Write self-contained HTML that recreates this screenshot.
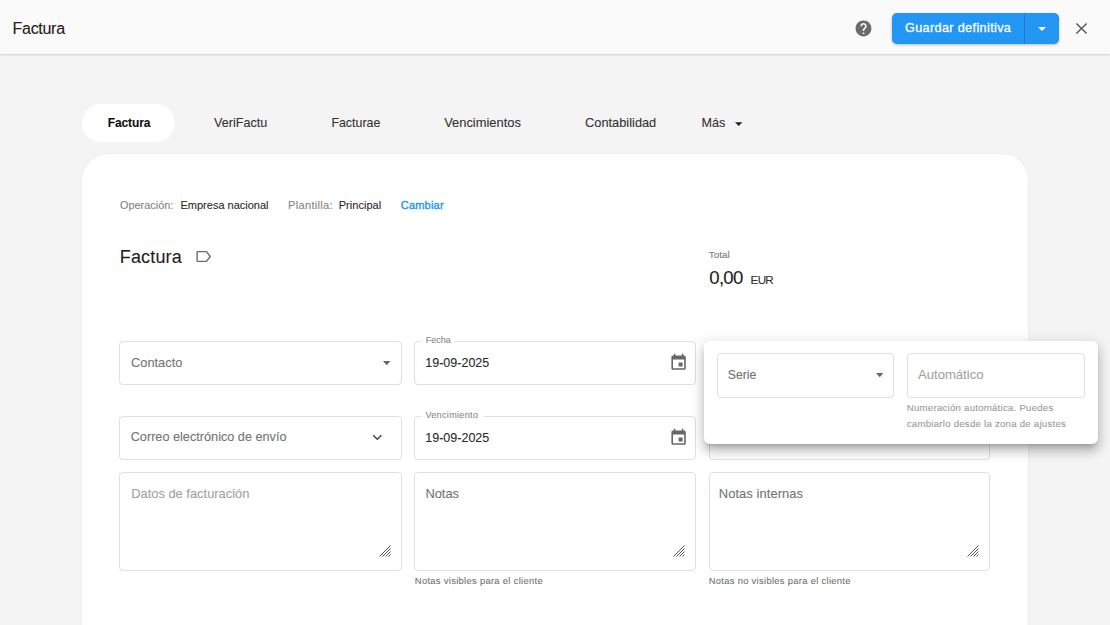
<!DOCTYPE html><html><head><meta charset="utf-8"><title>Factura</title><style>

*{margin:0;padding:0;box-sizing:border-box}
html,body{width:1110px;height:625px;overflow:hidden;background:#f4f4f4;font-family:"Liberation Sans",sans-serif}
.t{position:absolute;white-space:nowrap;-webkit-text-stroke:0.1px currentColor}
.a{position:absolute}
.hdr{left:0;top:0;width:1110px;height:54px;background:#fafafa;box-shadow:0 1px 3px rgba(0,0,0,.1),0 1px 1px rgba(0,0,0,.04)}
.pill{left:82px;top:104px;width:93px;height:38px;border-radius:19px;background:#fff}
.card{left:82px;top:154px;width:946px;height:520px;border-radius:26px;background:#fff;box-shadow:0 0 2px rgba(0,0,0,.08)}
.box{border:1px solid #e0e0e0;border-radius:4px;background:#fff}
.btn{left:892px;top:13px;width:167px;height:31px;border-radius:5px;background:#2196f3;box-shadow:0 1px 3px rgba(0,0,0,.25)}
.div{left:1024px;top:13px;width:1px;height:31px;background:#2a78c4}
.pop{left:704px;top:340.5px;width:393.5px;height:103px;border-radius:6px;background:#fff;box-shadow:0 5px 5px -3px rgba(0,0,0,.2),0 8px 10px 1px rgba(0,0,0,.14),0 3px 14px 2px rgba(0,0,0,.12)}

</style></head><body>
<div class="a hdr"></div>
<div class="a pill"></div>
<div class="a card"></div>
<div class="a btn"></div><div class="a div"></div>
<div class="a box" style="left:119px;top:341px;width:283px;height:43.5px;"></div>
<div class="a box" style="left:414px;top:341px;width:282px;height:43.5px;"></div>
<div class="a box" style="left:119px;top:416px;width:283px;height:44px;"></div>
<div class="a box" style="left:414px;top:416px;width:282px;height:44px;"></div>
<div class="a box" style="left:708.5px;top:341px;width:281.5px;height:119px;"></div>
<div class="a box" style="left:119px;top:472px;width:283px;height:99px;"></div>
<div class="a box" style="left:414px;top:472px;width:282px;height:99px;"></div>
<div class="a box" style="left:708.5px;top:472px;width:281.5px;height:99px;"></div>
<div class="a" style="left:421px;top:339px;width:34px;height:4px;background:#fff"></div>
<div class="a" style="left:421px;top:414px;width:62px;height:4px;background:#fff"></div>

<svg class="a" style="left:854.2px;top:19px" width="19" height="19" viewBox="0 0 24 24"><path fill="#6b6b6b" d="M12 2C6.48 2 2 6.48 2 12s4.48 10 10 10 10-4.48 10-10S17.52 2 12 2zm1 17h-2v-2h2v2zm2.07-7.75l-.9.92C13.45 12.9 13 13.5 13 15h-2v-.5c0-1.1.45-2.1 1.170-2.83l1.24-1.26c.37-.36.59-.86.59-1.41 0-1.1-.9-2-2-2s-2 .9-2 2H8c0-2.21 1.79-4 4-4s4 1.79 4 4c0 .88-.36 1.68-.93 2.25z"/></svg>
<svg class="a" style="left:1035px;top:22px" width="14" height="14" viewBox="0 0 14 14"><path fill="#fff" d="M3 5h8l-4 4z"/></svg>
<svg class="a" style="left:1075px;top:22px" width="13" height="13" viewBox="0 0 13 13"><path stroke="#555" stroke-width="1.4" d="M1.4 1.4L11.6 11.6M11.6 1.4L1.4 11.6"/></svg>
<svg class="a" style="left:731.7px;top:118px" width="12" height="12" viewBox="0 0 12 12"><path fill="#222" d="M3 4.3h7.4L6.7 8z"/></svg>
<svg class="a" style="left:195px;top:250px" width="17" height="13" viewBox="0 0 17 13"><path fill="none" stroke="#6b6b6b" stroke-width="1.4" stroke-linejoin="round" d="M2.9 1.6h8.6l3.7 4.9-3.7 4.9H2.9a.8.8 0 0 1-.8-.8V2.4a.8.8 0 0 1 .8-.8z"/></svg>
<svg class="a" style="left:380px;top:358px" width="14" height="10" viewBox="0 0 14 10"><path fill="#666" d="M3 3h7.4L6.7 7.2z"/></svg>
<svg class="a" style="left:371px;top:432px" width="12" height="10" viewBox="0 0 12 10"><path fill="none" stroke="#444" stroke-width="1.4" d="M2.2 3.2l4.1 4.1 4.1-4.1"/></svg>

<svg class="a" style="left:668.9px;top:353.2px" width="19.2" height="19.2" viewBox="0 0 24 24"><path fill="#666" d="M17 12h-5v5h5v-5zM16 1v2H8V1H6v2H5c-1.11 0-1.99.9-1.99 2L3 19c0 1.1.89 2 2 2h14c1.1 0 2-.9 2-2V5c0-1.1-.9-2-2-2h-1V1h-2zm3 18H5V8h14v11z"/></svg>
<svg class="a" style="left:668.9px;top:428.2px" width="19.2" height="19.2" viewBox="0 0 24 24"><path fill="#666" d="M17 12h-5v5h5v-5zM16 1v2H8V1H6v2H5c-1.11 0-1.99.9-1.99 2L3 19c0 1.1.89 2 2 2h14c1.1 0 2-.9 2-2V5c0-1.1-.9-2-2-2h-1V1h-2zm3 18H5V8h14v11z"/></svg>
<svg class="a" style="left:378.5px;top:545px" width="12" height="12" viewBox="0 0 12 12"><path stroke="#555" stroke-width="1" d="M0.5 11.5L11.5 0.5M3.5 11.5L11.5 3.5M6.5 11.5L11.5 6.5M9.5 11.5L11.5 9.5"/></svg>
<svg class="a" style="left:672.5px;top:545px" width="12" height="12" viewBox="0 0 12 12"><path stroke="#555" stroke-width="1" d="M0.5 11.5L11.5 0.5M3.5 11.5L11.5 3.5M6.5 11.5L11.5 6.5M9.5 11.5L11.5 9.5"/></svg>
<svg class="a" style="left:966.5px;top:545px" width="12" height="12" viewBox="0 0 12 12"><path stroke="#555" stroke-width="1" d="M0.5 11.5L11.5 0.5M3.5 11.5L11.5 3.5M6.5 11.5L11.5 6.5M9.5 11.5L11.5 9.5"/></svg>
<div class="t" style="left:12.60px;top:19.200px;font-size:16px;line-height:19.2px;color:#212121;letter-spacing:-0.3px;">Factura</div>
<div class="t" style="left:107.70px;top:116.200px;font-size:12px;line-height:14.4px;color:#111;font-weight:700;letter-spacing:-0.1px;">Factura</div>
<div class="t" style="left:214.00px;top:116.200px;font-size:12.6px;line-height:15.12px;color:#333;">VeriFactu</div>
<div class="t" style="left:331.40px;top:116.200px;font-size:12.4px;line-height:14.88px;color:#333;">Facturae</div>
<div class="t" style="left:444.20px;top:115.200px;font-size:12.9px;line-height:15.48px;color:#333;">Vencimientos</div>
<div class="t" style="left:585.10px;top:115.200px;font-size:12.8px;line-height:15.36px;color:#333;">Contabilidad</div>
<div class="t" style="left:701.50px;top:116.200px;font-size:12.6px;line-height:15.12px;color:#333;">Más</div>
<div class="t" style="left:905.00px;top:21.200px;font-size:12.6px;line-height:15.12px;color:#fff;letter-spacing:0.38px;-webkit-text-stroke:0.3px #fff;font-variant-ligatures:none;">Guardar definitiva</div>
<div class="t" style="left:120.00px;top:199.200px;font-size:10.9px;line-height:13.08px;color:#858585;">Operación:</div>
<div class="t" style="left:180.50px;top:199.200px;font-size:11px;line-height:13.2px;color:#2b2b2b;">Empresa nacional</div>
<div class="t" style="left:288.00px;top:199.200px;font-size:11.2px;line-height:13.44px;color:#858585;letter-spacing:0.25px;">Plantilla:</div>
<div class="t" style="left:338.70px;top:199.200px;font-size:11.1px;line-height:13.32px;color:#2b2b2b;">Principal</div>
<div class="t" style="left:400.80px;top:199.200px;font-size:11px;line-height:13.2px;color:#2196f3;letter-spacing:0.2px;-webkit-text-stroke:0.35px #2196f3;">Cambiar</div>
<div class="t" style="left:119.80px;top:247.200px;font-size:18px;line-height:21.6px;color:#1d1d1d;letter-spacing:0.15px;">Factura</div>
<div class="t" style="left:708.80px;top:249.200px;font-size:9.9px;line-height:11.88px;color:#7a7a7a;">Total</div>
<div class="t" style="left:709.30px;top:267.200px;font-size:18.6px;line-height:22.32px;color:#1d1d1d;letter-spacing:-0.75px;">0,00</div>
<div class="t" style="left:750.60px;top:273.200px;font-size:11.7px;line-height:14.04px;color:#333;letter-spacing:-0.75px;">EUR</div>
<div class="t" style="left:131.10px;top:355.200px;font-size:12.8px;line-height:15.36px;color:#747474;">Contacto</div>
<div class="t" style="left:425.80px;top:335.200px;font-size:9px;line-height:10.8px;color:#8a8a8a;">Fecha</div>
<div class="t" style="left:425.30px;top:356.200px;font-size:12.5px;line-height:15.0px;color:#2b2b2b;">19-09-2025</div>
<div class="t" style="left:130.70px;top:430.200px;font-size:12.7px;line-height:15.24px;color:#747474;">Correo electrónico de envío</div>
<div class="t" style="left:425.40px;top:410.200px;font-size:9px;line-height:10.8px;color:#8a8a8a;letter-spacing:0.35px;">Vencimiento</div>
<div class="t" style="left:425.30px;top:431.200px;font-size:12.5px;line-height:15.0px;color:#2b2b2b;">19-09-2025</div>
<div class="t" style="left:131.20px;top:486.200px;font-size:12.9px;line-height:15.48px;color:#a3a3a3;">Datos de facturación</div>
<div class="t" style="left:425.40px;top:486.200px;font-size:12.9px;line-height:15.48px;color:#747474;">Notas</div>
<div class="t" style="left:718.80px;top:486.200px;font-size:12.9px;line-height:15.48px;color:#747474;letter-spacing:0.08px;">Notas internas</div>
<div class="t" style="left:414.80px;top:575.200px;font-size:9.4px;line-height:11.28px;color:#737373;letter-spacing:0.31px;">Notas visibles para el cliente</div>
<div class="t" style="left:708.70px;top:575.200px;font-size:9.4px;line-height:11.28px;color:#737373;letter-spacing:0.31px;">Notas no visibles para el cliente</div>
<div class="a pop"></div>
<div class="a box" style="left:716.5px;top:353px;width:177.5px;height:44.5px;"></div>
<div class="a box" style="left:906.5px;top:353px;width:178.5px;height:44.5px;"></div>
<svg class="a" style="left:873px;top:370px" width="14" height="10" viewBox="0 0 14 10"><path fill="#666" d="M3 3h7.4L6.7 7.2z"/></svg>
<div class="t" style="left:727.70px;top:368.200px;font-size:12.3px;line-height:14.76px;color:#747474;">Serie</div>
<div class="t" style="left:918.00px;top:367.200px;font-size:13.1px;line-height:15.72px;color:#a3a3a3;">Automático</div>
<div class="t" style="left:906.80px;top:402.200px;font-size:9.6px;line-height:11.52px;color:#9a9a9a;letter-spacing:0.26px;">Numeración automática. Puedes</div>
<div class="t" style="left:906.80px;top:418.200px;font-size:9.6px;line-height:11.52px;color:#9a9a9a;letter-spacing:0.26px;">cambiarlo desde la zona de ajustes</div>
</body></html>
